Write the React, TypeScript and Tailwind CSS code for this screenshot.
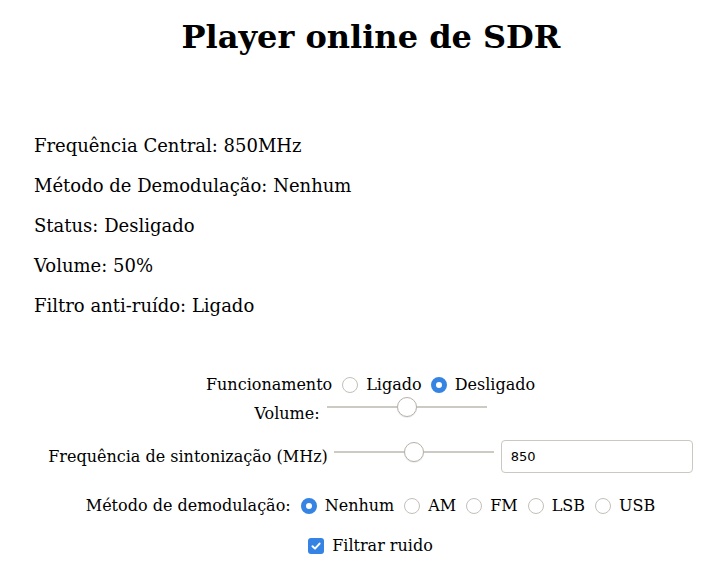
import React from "react";

const serif = { fontFamily: '"DejaVu Serif", serif' };

function Radio({ checked }: { checked?: boolean }) {
  return checked ? (
    <span className="block w-[16px] h-[16px] rounded-full border-[5px] border-[#3584e4] bg-white shrink-0" />
  ) : (
    <span className="block w-[16px] h-[16px] rounded-full border border-[#c3bfb9] bg-white shrink-0" />
  );
}

function Slider() {
  return (
    <div className="relative w-[160px] h-[20px] flex items-center shrink-0">
      <div className="w-full h-[2px] bg-[#cdc9c3]" />
      <div className="absolute left-[70px] top-0 w-[20px] h-[20px] rounded-full bg-white border border-[#b5b0a9] shadow-[0_1px_1px_rgba(0,0,0,0.08)]" />
    </div>
  );
}

export default function App() {
  return (
    <div className="w-[727px] min-h-[585px] bg-white text-black" style={serif}>
      <h1 className="text-[32px] font-bold text-center pl-[15px] pt-[17px] leading-[40px]">Player online de SDR</h1>

      <div className="pl-[34px] mt-[78px] flex flex-col gap-[19px] text-[18px] leading-[21px]">
        <p>Frequência Central: 850MHz</p>
        <p>Método de Demodulação: Nenhum</p>
        <p>Status: Desligado</p>
        <p>Volume: 50%</p>
        <p>Filtro anti-ruído: Ligado</p>
      </div>

      <div className="pl-[14px] mt-[59px] flex flex-col items-center text-[16px] leading-[20px]">
        <div className="flex items-center">
          <span>Funcionamento</span>
          <span className="ml-[10px]"><Radio /></span>
          <span className="ml-[8px]">Ligado</span>
          <span className="ml-[9px]"><Radio checked /></span>
          <span className="ml-[8px]">Desligado</span>
        </div>
        <div className="flex items-start mt-[2px] h-[30px]">
          <span className="mt-[7px]">Volume:</span>
          <span className="ml-[7px]"><Slider /></span>
        </div>
        <div className="flex items-center mt-[13px]">
          <span>Frequência de sintonização (MHz)</span>
          <span className="ml-[6px] -mt-[10px]"><Slider /></span>
          <div
            className="ml-[7px] w-[192px] h-[33px] border border-[#cbc7c1] rounded-[4px] flex items-center pl-[9px] text-[13px]"
            style={{ fontFamily: '"DejaVu Sans", sans-serif' }}
          >
            850
          </div>
        </div>
        <div className="flex items-center mt-[23px]">
          <span>Método de demodulação:</span>
          <span className="ml-[10px]"><Radio checked /></span>
          <span className="ml-[8px]">Nenhum</span>
          <span className="ml-[10px]"><Radio /></span>
          <span className="ml-[8px]">AM</span>
          <span className="ml-[10px]"><Radio /></span>
          <span className="ml-[8px]">FM</span>
          <span className="ml-[10px]"><Radio /></span>
          <span className="ml-[8px]">LSB</span>
          <span className="ml-[10px]"><Radio /></span>
          <span className="ml-[8px]">USB</span>
        </div>
        <div className="flex items-center mt-[20px]">
          <span className="w-[16px] h-[16px] rounded-[3px] bg-[#3584e4] flex items-center justify-center">
            <svg width="12" height="12" viewBox="0 0 12 12">
              <path d="M2.5 6.2 L5 8.6 L9.6 3.6" fill="none" stroke="white" strokeWidth="2" strokeLinecap="round" strokeLinejoin="round" />
            </svg>
          </span>
          <span className="ml-[8px]">Filtrar ruido</span>
        </div>
      </div>
    </div>
  );
}
